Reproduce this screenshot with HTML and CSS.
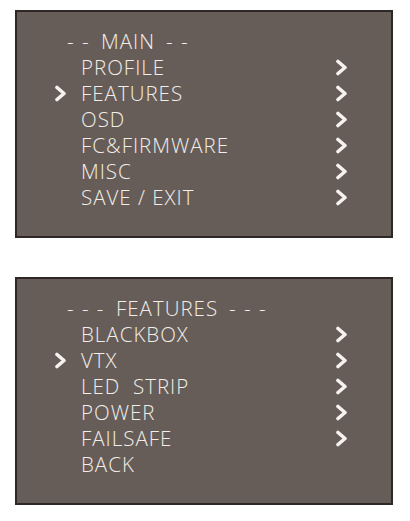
FILE: index.html
```html
<!DOCTYPE html>
<html lang="en">
<head>
    <meta charset="UTF-8">
    <meta name="viewport" content="width=device-width, initial-scale=1.0">
    <title>OSD Menu</title>
    <link rel="stylesheet" href="styles.css">
</head>
<body>
    <!-- chevron symbol, reused in both screens -->
    <svg width="0" height="0" class="defs">
        <symbol id="chev" viewBox="0 0 13 17">
            <polyline points="3,2.5 10,8.5 3,14.5" fill="none" stroke="#f6f2ee" stroke-width="3.6" stroke-linecap="round" stroke-linejoin="round" />
        </symbol>
    </svg>

    <!-- Main menu -->
    <div class="screen">
        <div class="title"><span class="dash">- -</span>MAIN<span class="dash">- -</span></div>
        <ul class="menu">
            <li><span class="cursor"></span><span class="name">PROFILE</span><svg class="arrow"><use href="#chev" /></svg></li>
            <li><svg class="cursor"><use href="#chev" /></svg><span class="name">FEATURES</span><svg class="arrow"><use href="#chev" /></svg></li>
            <li><span class="cursor"></span><span class="name">OSD</span><svg class="arrow"><use href="#chev" /></svg></li>
            <li><span class="cursor"></span><span class="name">FC&amp;FIRMWARE</span><svg class="arrow"><use href="#chev" /></svg></li>
            <li><span class="cursor"></span><span class="name">MISC</span><svg class="arrow"><use href="#chev" /></svg></li>
            <li><span class="cursor"></span><span class="name">SAVE / EXIT</span><svg class="arrow"><use href="#chev" /></svg></li>
        </ul>
    </div>

    <!-- Features submenu -->
    <div class="screen">
        <div class="title"><span class="dash">- - -</span>FEATURES<span class="dash">- - -</span></div>
        <ul class="menu">
            <li><span class="cursor"></span><span class="name">BLACKBOX</span><svg class="arrow"><use href="#chev" /></svg></li>
            <li><svg class="cursor"><use href="#chev" /></svg><span class="name">VTX</span><svg class="arrow"><use href="#chev" /></svg></li>
            <li><span class="cursor"></span><span class="name">LED&nbsp; STRIP</span><svg class="arrow"><use href="#chev" /></svg></li>
            <li><span class="cursor"></span><span class="name">POWER</span><svg class="arrow"><use href="#chev" /></svg></li>
            <li><span class="cursor"></span><span class="name">FAILSAFE</span><svg class="arrow"><use href="#chev" /></svg></li>
            <li><span class="cursor"></span><span class="name">BACK</span></li>
        </ul>
    </div>
</body>
</html>
```

FILE: styles.css
```css
body {
    margin: 0;
    padding: 10px 0 0 15px;
    background-color: #ffffff;
    font-family: "Open Sans", sans-serif;
}
.defs {
    position: absolute;
}
.screen {
    width: 374px;
    height: 208px;
    margin-bottom: 39px;
    background-color: #665d58;
    border: 2px solid #2d2725;
    padding-top: 16px;
    color: #f3eee9;
    font-size: 20.5px;
    font-weight: 300;
    letter-spacing: 1px;
}
.title {
    display: flex;
    align-items: center;
    height: 26px;
    margin-left: 50px;
    gap: 11px;
    line-height: 26px;
}
.dash {
    letter-spacing: 1.5px;
}
.menu {
    list-style: none;
    margin: 0;
    padding: 0;
}
.menu li {
    display: flex;
    align-items: center;
    height: 26px;
}
.cursor {
    display: block;
    width: 13px;
    height: 17px;
    margin-left: 37px;
    margin-right: 14px;
}
.name {
    width: 254px;
    white-space: nowrap;
}
.arrow {
    width: 13px;
    height: 17px;
}
```
